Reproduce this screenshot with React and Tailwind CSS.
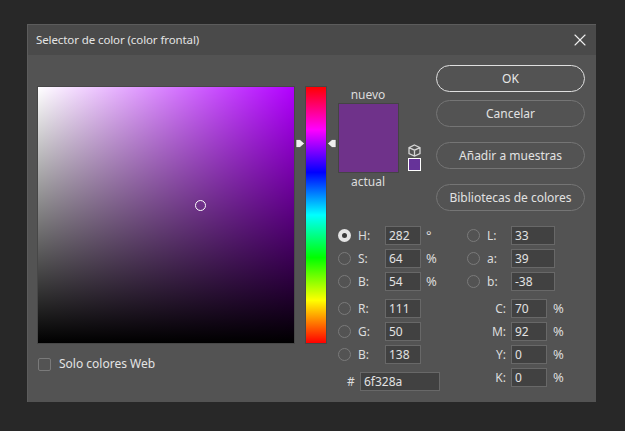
import { X } from "lucide-react";

const Radio = ({ on }) => (
  <span
    className={
      on
        ? "w-[13px] h-[13px] rounded-full bg-[#e4e4e4] flex items-center justify-center shrink-0"
        : "w-[13px] h-[13px] rounded-full border border-[#7a7a7a] shrink-0"
    }
  >
    {on && <span className="w-[5px] h-[5px] rounded-full bg-[#3a3a3a]" />}
  </span>
);

const Input = ({ value, w = "w-[36px]" }) => (
  <div className={`${w} h-[19px] bg-[#414141] border border-[#686868] pl-[3px] flex items-center text-[12px] text-[#e2e2e2] shrink-0`}>
    {value}
  </div>
);

const Row = ({ on, label, value, unit }) => (
  <div className="flex items-center h-[19px]">
    <Radio on={on} />
    <span className="w-[34px] pl-[7px] shrink-0">{label}</span>
    <Input value={value} />
    <span className="pl-[5px] text-[13px]">{unit}</span>
  </div>
);

const LabRow = ({ label, value }) => (
  <div className="flex items-center h-[19px]">
    <Radio />
    <span className="w-[31px] pl-[7px] shrink-0">{label}</span>
    <Input value={value} w="w-[44px]" />
  </div>
);

const CmykRow = ({ label, value }) => (
  <div className="flex items-center h-[19px]">
    <span className="w-[44px] pr-[5px] text-right shrink-0">{label}</span>
    <Input value={value} />
    <span className="pl-[6px] text-[13px]">%</span>
  </div>
);

const Button = ({ children, primary }) => (
  <button
    className={
      primary
        ? "w-[149px] h-[27px] rounded-full border border-[#e0e0e0] text-[12px] text-[#e8e8e8]"
        : "w-[149px] h-[27px] rounded-full border border-[#757575] text-[12px] text-[#e2e2e2]"
    }
  >
    {children}
  </button>
);

export default function App() {
  return (
    <div className="w-[625px] h-[431px] bg-[#282828] pt-[24px] pl-[27px] font-['Noto_Sans',sans-serif] text-[12px] text-[#dcdcdc]">
      <div className="w-[569px] h-[378px] bg-[#535353] border-t border-l border-[#5c5c5c]">
        <div className="h-[30px] bg-[#4a4a4a] flex items-center justify-between pl-[8px] pr-[6px] text-[#e4e4e4]">
          <span className="text-[11.5px] tracking-[-0.1px]">Selector de color (color frontal)</span>
          <X className="w-[20px] h-[20px] text-[#f0f0f0]" strokeWidth={1.3} />
        </div>
        <div className="flex pl-[10px]">
          {/* picker */}
          <div className="w-[256px] pt-[32px] shrink-0">
            <div className="relative w-[256px] h-[256px] outline outline-[#474747] bg-[linear-gradient(to_top,#000,transparent),linear-gradient(to_right,#fff,transparent)] bg-[#b200ff]">
              <span className="absolute left-[157px] top-[113px] w-[11px] h-[11px] rounded-full border border-white" />
            </div>
            <div className="flex items-center mt-[12px]">
              <span className="w-[13px] h-[13px] rounded-[2px] border border-[#7a7a7a]" />
              <span className="pl-[8px] text-[#e4e4e4]">Solo colores Web</span>
            </div>
          </div>

          {/* hue strip */}
          <div className="relative ml-[12px] mt-[32px] w-[20px] h-[256px] shrink-0 outline outline-[#474747] bg-[linear-gradient(to_bottom,#f00,#f0f_16.67%,#00f_33.33%,#0ff_50%,#0f0_66.67%,#ff0_83.33%,#f00)]">
            <svg className="absolute left-[-11px] top-[51px]" width="10" height="11" viewBox="0 0 10 11">
              <path d="M1 1.5h4L9.5 5.5 5 9.5H1z" fill="#eeeeee" stroke="#383838" strokeWidth="0.6" />
            </svg>
            <svg className="absolute right-[-11px] top-[51px]" width="10" height="11" viewBox="0 0 10 11">
              <path d="M9 1.5H5L.5 5.5 5 9.5h4z" fill="#eeeeee" stroke="#383838" strokeWidth="0.6" />
            </svg>
          </div>

          {/* right side */}
          <div className="ml-[12px] flex flex-col">
            <div className="flex h-[156px]">
              <div className="w-[98px] shrink-0">
                <div className="pt-[32px] w-[60px] text-center leading-[16px]">nuevo</div>
                <div className="flex items-end">
                  <div className="w-[61px] h-[70px] bg-[#6f328a] border border-[#444444] shrink-0" />
                  <div className="ml-[9px] flex flex-col items-start mb-[2px]">
                    <svg width="13" height="13" viewBox="0 0 13 13" fill="none" stroke="#d4d4d4" strokeWidth="1.3">
                      <path d="M6.5 1 12 3.6v5.9L6.5 12 1 9.5V3.6z M1 3.6l5.5 2.6L12 3.6 M6.5 6.2V12" />
                    </svg>
                    <div className="w-[13px] h-[13px] mt-[1px] bg-[#663399] border border-white" />
                  </div>
                </div>
                <div className="w-[60px] text-center leading-[18px]">actual</div>
              </div>
              <div className="flex flex-col pt-[10px]">
                <Button primary>OK</Button>
                <div className="mt-[8px]"><Button>Cancelar</Button></div>
                <div className="mt-[15px]"><Button>Añadir a muestras</Button></div>
                <div className="mt-[15px]"><Button>Bibliotecas de colores</Button></div>
              </div>
            </div>

            {/* fields */}
            <div className="flex mt-[15px]">
              <div className="w-[129px] shrink-0 flex flex-col gap-[4px]">
                <Row on label="H:" value="282" unit="°" />
                <Row label="S:" value="64" unit="%" />
                <Row label="B:" value="54" unit="%" />
                <div className="mt-[4px]"><Row label="R:" value="111" /></div>
                <Row label="G:" value="50" />
                <Row label="B:" value="138" />
                <div className="mt-[4px] flex items-center h-[19px]">
                  <span className="w-[22px] pl-[9px] shrink-0">#</span>
                  <Input value="6f328a" w="w-[80px]" />
                </div>
              </div>
              <div className="flex flex-col gap-[4px]">
                <LabRow label="L:" value="33" />
                <LabRow label="a:" value="39" />
                <LabRow label="b:" value="-38" />
                <div className="mt-[4px]"><CmykRow label="C:" value="70" /></div>
                <CmykRow label="M:" value="92" />
                <CmykRow label="Y:" value="0" />
                <CmykRow label="K:" value="0" />
              </div>
            </div>
          </div>
        </div>
      </div>
    </div>
  );
}
